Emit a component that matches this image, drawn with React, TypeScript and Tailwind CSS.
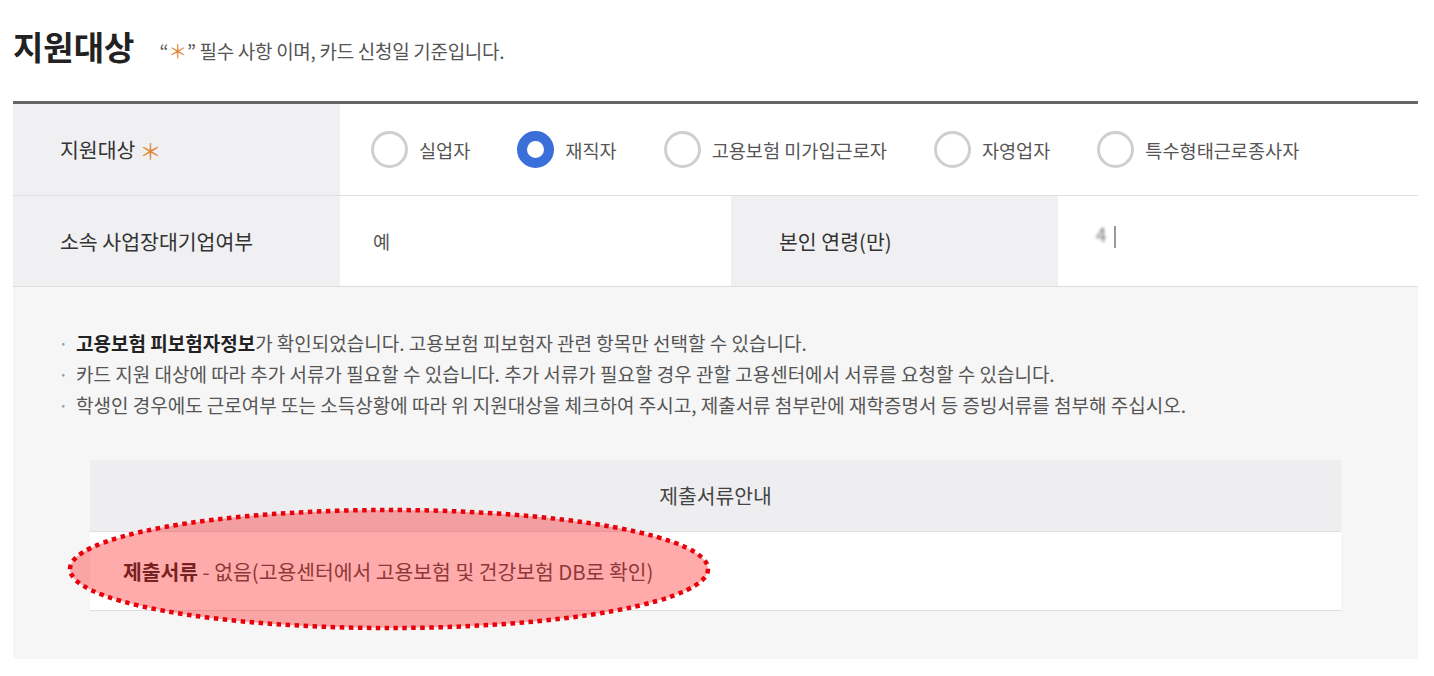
const radios = [
  { label: '실업자', checked: false },
  { label: '재직자', checked: true },
  { label: '고용보험 미가입근로자', checked: false },
  { label: '자영업자', checked: false },
  { label: '특수형태근로종사자', checked: false },
];

const notices = [
  { strong: '고용보험 피보험자정보', rest: '가 확인되었습니다. 고용보험 피보험자 관련 항목만 선택할 수 있습니다.' },
  { strong: '', rest: '카드 지원 대상에 따라 추가 서류가 필요할 수 있습니다. 추가 서류가 필요할 경우 관할 고용센터에서 서류를 요청할 수 있습니다.' },
  { strong: '', rest: '학생인 경우에도 근로여부 또는 소득상황에 따라 위 지원대상을 체크하여 주시고, 제출서류 첨부란에 재학증명서 등 증빙서류를 첨부해 주십시오.' },
];

const Radio = ({ checked }: { checked: boolean }) =>
  checked ? (
    <span className="w-[37px] h-[37px] rounded-full border-[10px] border-[#3a6fd9] bg-white flex-shrink-0" />
  ) : (
    <span className="w-[37px] h-[37px] rounded-full border-[3px] border-[#cfcfcf] bg-white flex-shrink-0" />
  );

const App = () => {
  return (
    <div className="w-[1434px] h-[676px] bg-white text-[#333] font-['Noto_Sans_CJK_KR','Noto_Sans',sans-serif] relative">
      <div className="ml-[13px] w-[1405px] pt-[24px]">
        {/* title */}
        <div className="flex items-end h-[44px]">
          <h2 className="text-[33px] font-bold leading-[44px] text-[#222]">지원대상</h2>
          <p className="ml-[25px] mb-[3px] text-[19px] leading-[28px] text-[#555] tracking-[-0.3px]">
            “<span className="text-[#e0883a]">＊</span>” 필수 사항 이며, 카드 신청일 기준입니다.
          </p>
        </div>

        {/* form table */}
        <div className="mt-[33px] border-t-[3px] border-[#666]">
          <div className="flex h-[92px] border-b border-[#dedede]">
            <div className="w-[327px] bg-[#f0f0f2] flex items-center pl-[47px] text-[20.5px] text-[#333]">
              지원대상<span className="ml-[4px] text-[#e0883a] text-[22px]">＊</span>
            </div>
            <div className="flex-1 flex items-center pl-[31px] gap-[47px]">
              {radios.map((r) => (
                <label key={r.label} className="flex items-center gap-[11px] text-[18.6px] text-[#555]">
                  <Radio checked={r.checked} />
                  <span>{r.label}</span>
                </label>
              ))}
            </div>
          </div>
          <div className="flex h-[91px] border-b border-[#dedede]">
            <div className="w-[327px] bg-[#f0f0f2] flex items-center pl-[47px] text-[20.5px] text-[#333]">
              소속 사업장대기업여부
            </div>
            <div className="w-[391px] flex items-center pl-[33px] text-[18.6px] text-[#555]">예</div>
            <div className="w-[327px] bg-[#f0f0f2] flex items-center pl-[48px] text-[20.5px] text-[#333]">
              본인 연령(만)
            </div>
            <div className="flex-1 flex items-start pt-[24px] pl-[38px] text-[18.6px] text-[#777]">
              <span className="blur-[1.5px]">4</span>
              <span className="ml-[8px] w-[2px] h-[22px] mt-[6px] bg-[#999]" />
            </div>
          </div>
        </div>

        {/* notices */}
        <div className="bg-[#f6f6f6] pt-[40px] pb-[48px]">
          <ul className="pl-[45px] text-[19px] leading-[31px] text-[#555]">
            {notices.map((n, i) => (
              <li key={i} className="flex">
                <span className="w-[18px] text-[#999]">·</span>
                <span>
                  {n.strong && <strong className="font-bold text-[#222]">{n.strong}</strong>}
                  {n.rest}
                </span>
              </li>
            ))}
          </ul>

          <div className="mt-[40px] mx-[77px] bg-white border-b border-[#dedede]">
            <div className="h-[72px] bg-[#eeeef0] border-b border-[#dedede] flex items-center justify-center text-[20.4px] text-[#444]">
              제출서류안내
            </div>
            <div className="h-[78px] flex items-center pl-[33px] text-[20.4px] text-[#555]">
              <strong className="font-bold text-[#333]">제출서류</strong>&nbsp;- 없음(고용센터에서 고용보험 및 건강보험 DB로 확인)
            </div>
          </div>
        </div>
      </div>

      {/* highlight annotation */}
      <svg className="absolute left-[66px] top-[506px] pointer-events-none" width="646" height="126" viewBox="0 0 646 126">
        <ellipse
          cx="323"
          cy="63"
          rx="319"
          ry="59"
          fill="rgba(255,0,0,0.33)"
          stroke="#e8000a"
          strokeWidth="4.5"
          strokeDasharray="4.5 4.5"
        />
      </svg>
    </div>
  );
};

export default App;
